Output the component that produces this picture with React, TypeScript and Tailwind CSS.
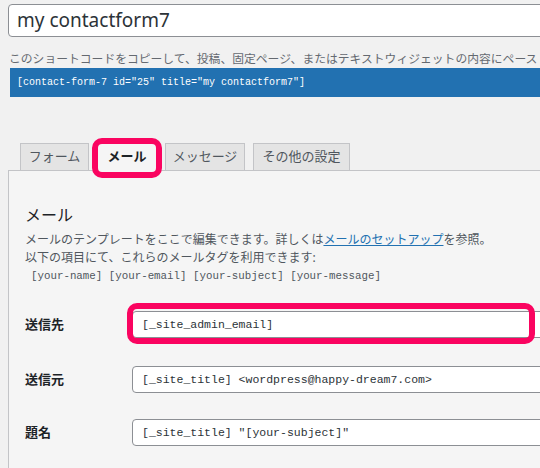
import React from 'react';

const jp = '"Segoe UI", "Noto Sans", "Noto Sans CJK JP", sans-serif';
const mono = '"Liberation Mono", "DejaVu Sans Mono", monospace';

const tabs = [
  { label: 'フォーム', width: 'w-[69px]' },
  { label: 'メール', width: 'w-[60px]', active: true },
  { label: 'メッセージ', width: 'w-[80px]' },
  { label: 'その他の設定', width: 'w-[97px]' },
];

function Field({ label, value, highlight, className }: { label: string; value: string; highlight?: boolean; className?: string }) {
  return (
    <div className={`flex items-center ${className ?? ''}`}>
      <div className="w-[107px] shrink-0 text-[13px] font-bold text-[#1d2327]">{label}</div>
      <div className="relative">
        <div
          className="flex h-[27px] w-[440px] items-center rounded-[4px] border border-[#8c8f94] bg-white px-[9px] text-[11.5px] text-[#2c3338]"
          style={{ fontFamily: mono }}
        >
          {value}
        </div>
        {highlight && (
          <div className="absolute -left-[5px] -top-[8px] h-[41px] w-[408px] rounded-[10px] border-[6px] border-[#fa0460]" />
        )}
      </div>
    </div>
  );
}

export default function App() {
  return (
    <div className="h-[468px] w-[540px] overflow-hidden bg-[#f1f1f1] pl-2" style={{ fontFamily: jp }}>
      <div className="mt-[4px] flex h-[33px] w-[560px] items-center rounded-[4px] border border-[#8c8f94] bg-white px-[8px] text-[19px] text-[#2c3338]">
        my contactform7
      </div>
      <p className="mt-[12px] whitespace-nowrap pl-px text-[11.8px] leading-[18px] text-[#646970]">
        このショートコードをコピーして、投稿、固定ページ、またはテキストウィジェットの内容にペース
      </p>
      <div
        className="ml-[2px] mt-[1px] flex h-[29px] items-center whitespace-nowrap bg-[#2271b1] pl-[7px] text-[10px] text-white"
        style={{ fontFamily: mono }}
      >
        [contact-form-7 id="25" title="my contactform7"]
      </div>

      <div className="relative z-10 -mb-px ml-[12px] mt-[46px] flex items-end gap-2">
        {tabs.map((t) => (
          <div key={t.label} className={`relative ${t.width}`}>
            <div
              className={`flex h-[28px] items-center justify-center border border-[#c3c4c7] text-[13px] ${
                t.active ? 'border-b-[#f5f5f5] bg-[#f5f5f5] font-bold text-[#1d2327]' : 'bg-[#e4e4e4] text-[#50575e]'
              }`}
            >
              {t.label}
            </div>
            {t.active && (
              <div className="absolute -left-[5px] -top-[5px] h-[40px] w-[70px] rounded-[10px] border-[6px] border-[#fa0460]" />
            )}
          </div>
        ))}
      </div>

      <div className="h-[400px] border-l border-t border-[#c3c4c7] bg-[#f5f5f5] pl-[16px] pt-[33px]">
        <h2 className="text-[16px] leading-[22px] text-[#1d2327]">メール</h2>
        <div className="mt-[5px] whitespace-nowrap text-[12px] leading-[18px] text-[#50575e]">
          <p>
            メールのテンプレートをここで編集できます。詳しくは
            <span className="text-[#2271b1] underline">メールのセットアップ</span>を参照。
          </p>
          <p>以下の項目にて、これらのメールタグを利用できます:</p>
          <p className="pl-[6px] text-[10.8px]" style={{ fontFamily: mono }}>
            [your-name] [your-email] [your-subject] [your-message]
          </p>
        </div>

        <Field className="mt-[26px]" label="送信先" value="[_site_admin_email]" highlight />
        <Field className="mt-[28px]" label="送信元" value="[_site_title] <wordpress@happy-dream7.com>" />
        <Field className="mt-[26px]" label="題名" value={'[_site_title] "[your-subject]"'} />
      </div>
    </div>
  );
}
